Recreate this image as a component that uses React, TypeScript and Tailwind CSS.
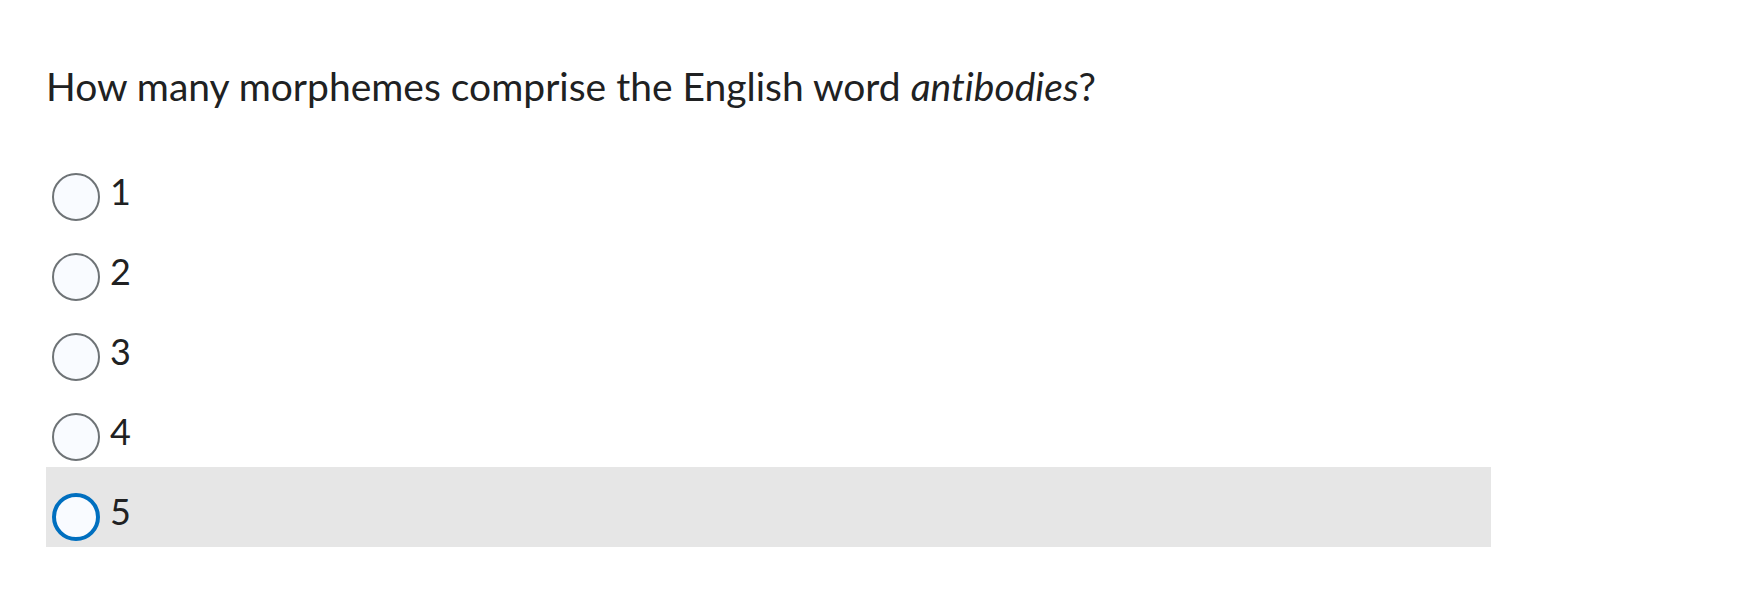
import { useState } from "react";

const options = ["1", "2", "3", "4", "5"];

function Radio({ active }: { active: boolean }) {
  return (
    <span
      className={
        "block h-[48px] w-[48px] shrink-0 rounded-full bg-[#f9fbff] " +
        (active ? "border-[4px] border-[#006fbf]" : "border-2 border-[#6e7376]")
      }
    />
  );
}

export default function App() {
  const [hovered] = useState(4);

  return (
    <div className="min-h-[601px] bg-white pl-[46px] pt-[63px] font-['Lato','Liberation_Sans',sans-serif] text-[#202122] [font-variant-ligatures:none]">
      <p className="text-[39px] leading-[47px]">
        How many morphemes comprise the English word <em>antibodies</em>?
      </p>

      <div className="mt-[37px] w-[1445px]">
        {options.map((opt, i) => (
          <label
            key={opt}
            className={
              "flex h-[80px] cursor-pointer items-start gap-[10px] pl-[6px] pt-[26px] " +
              (i === hovered ? "bg-[#e6e6e6]" : "")
            }
          >
            <Radio active={i === hovered} />
            <span className="text-[36px] leading-[36px]">{opt}</span>
          </label>
        ))}
      </div>
    </div>
  );
}
